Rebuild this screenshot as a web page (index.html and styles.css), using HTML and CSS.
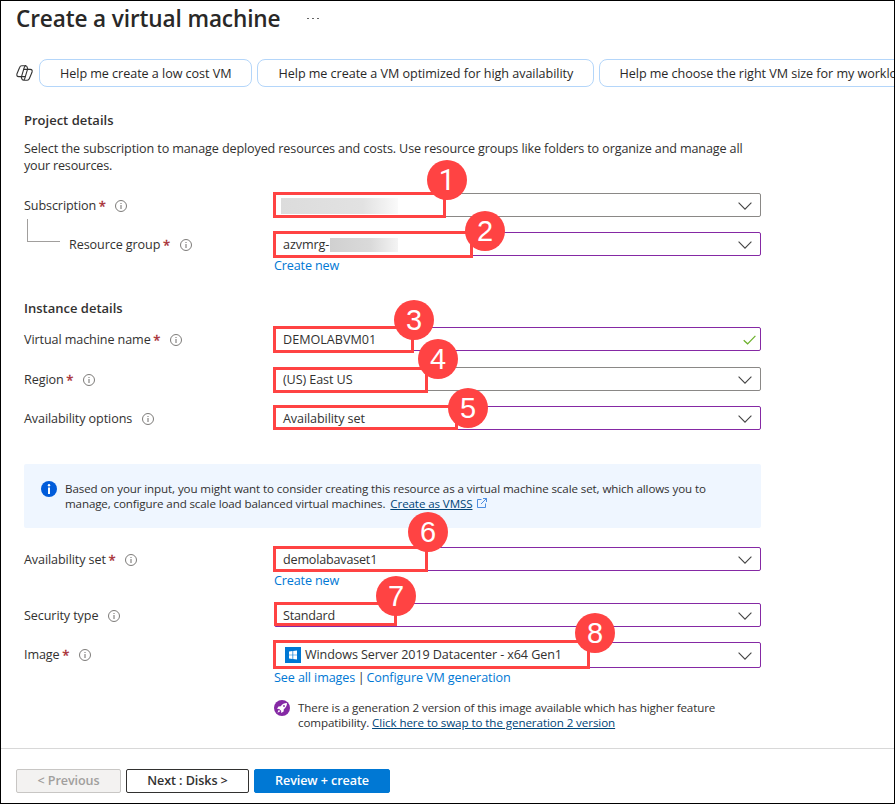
FILE: index.html
```html
<!DOCTYPE html>
<html lang="en">
<head>
<meta charset="utf-8">
<title>Create a virtual machine</title>
<link rel="stylesheet" href="styles.css">
</head>
<body>
<svg class="defs" width="0" height="0">
  <symbol id="info" viewBox="0 0 12 12"><circle cx="6" cy="6" r="5.5" fill="none" stroke="#6e6c6a" stroke-width=".9"/><path d="M6 5v4M6 3v1" stroke="#6e6c6a"/></symbol>
  <symbol id="chev" viewBox="0 0 14 8"><path d="M.6.7 7 7.1 13.4.7" fill="none" stroke="#444" stroke-width="1.1"/></symbol>
</svg>
<div class="page">
  <header class="head"><h1>Create a virtual machine</h1><span class="more"><i></i><i></i><i></i></span></header>
  <div class="chips">
    <svg class="copilot" viewBox="0 0 17 16" fill="none" stroke="#333" stroke-width="1.1" stroke-linejoin="round"><path d="M11.800 4.300 11.300 2.500Q10.900.8 9.400.8H5.800Q4.200.8 3.600 2.500L1 8.700Q.2 11.600 2.700 11.600H5.500L8.200 2.700Q8.800.8 10 .8"/><path d="M5.200 11.700 5.700 13.500Q6.100 15.200 7.600 15.200H11.200Q12.800 15.200 13.400 13.500L16 7.300Q16.800 4.400 14.300 4.400H11.500L8.800 13.300Q8.200 15.200 7 15.200"/><path d="M7.200 4.400h4.300M5.500 11.600h4"/></svg>
    <div class="chip c1">Help me create a low cost VM</div>
    <div class="chip c2">Help me create a VM optimized for high availability</div>
    <div class="chip c3">Help me choose the right VM size for my workload</div>
  </div>
  <main>
    <h2>Project details</h2>
    <p class="intro"><span class="wide">Select the subscription to manage deployed resources and costs. Use resource groups like folders to organize and manage all</span><br>your resources.</p>

    <div class="row r-sub">
      <label>Subscription <b>*</b><svg class="info"><use href="#info"/></svg></label>
      <div class="field gray"><span class="redact long"></span><svg class="chev"><use href="#chev"/></svg><span class="mark m1"><em>1</em></span></div>
    </div>
    <div class="row r-group">
      <label><span class="elbow"></span>Resource group <b>*</b><svg class="info"><use href="#info"/></svg></label>
      <div class="field">azvmrg-<span class="redact"></span><svg class="chev"><use href="#chev"/></svg><span class="mark m2"><em>2</em></span></div>
    </div>
    <div class="links"><a>Create new</a></div>

    <h2 class="second">Instance details</h2>
    <div class="row r-name">
      <label>Virtual machine name <b>*</b><svg class="info"><use href="#info"/></svg></label>
      <div class="field"><span class="t-name">DEMOLABVM01</span><svg class="check" viewBox="0 0 13 10"><path d="M.7 5.200 4.600 8.800 12.400.8" fill="none" stroke="#6bb02a" stroke-width="1.2"/></svg><span class="mark m3"><em>3</em></span></div>
    </div>
    <div class="row r-region">
      <label>Region <b>*</b><svg class="info"><use href="#info"/></svg></label>
      <div class="field gray">(US) East US<svg class="chev"><use href="#chev"/></svg><span class="mark m4"><em>4</em></span></div>
    </div>
    <div class="row r-opt">
      <label>Availability options<svg class="info"><use href="#info"/></svg></label>
      <div class="field">Availability set<svg class="chev"><use href="#chev"/></svg><span class="mark m5"><em>5</em></span></div>
    </div>

    <div class="banner">
      <svg class="binfo" viewBox="0 0 16 16"><circle cx="8" cy="8" r="8" fill="#015cda"/><circle cx="8" cy="4.200" r="1.200" fill="#fff"/><path d="M8 6.500V13" stroke="#fff" stroke-width="2"/></svg>
      <p>Based on your input, you might want to consider creating this resource as a virtual machine scale set, which allows you to<br><span class="l2">manage, configure and scale load balanced virtual machines.</span><a class="vmss">Create as VMSS</a><svg class="ext" viewBox="0 0 10 10"><path d="M4.500 1.500H.5v8h8v-4M6 .5h3.500V4M9.500.5 4 6" fill="none" stroke="#3b82dc" stroke-width=".9"/></svg></p>
    </div>

    <div class="row r-set">
      <label>Availability set <b>*</b><svg class="info"><use href="#info"/></svg></label>
      <div class="field"><span class="t-set">demolabavaset1</span><svg class="chev"><use href="#chev"/></svg><span class="mark m6"><em>6</em></span></div>
    </div>
    <div class="links"><a>Create new</a></div>
    <div class="row r-sec">
      <label>Security type<svg class="info"><use href="#info"/></svg></label>
      <div class="field"><span class="t-std">Standard</span><svg class="chev"><use href="#chev"/></svg><span class="mark m7"><em>7</em></span></div>
    </div>
    <div class="row r-img">
      <label>Image <b>*</b><svg class="info"><use href="#info"/></svg></label>
      <div class="field tall"><svg class="win" viewBox="0 0 16 16"><path fill="#0078d4" d="M0 0h16v16H0z"/><path fill="#fff" d="M4 4.500 7.500 4v3.700H4zM8.200 3.900 12 3.400v4.300H8.200zM4 8.300h3.500V12L4 11.500zM8.200 8.300H12v4.300l-3.800-.5z"/></svg>Windows Server 2019 Datacenter - x64 Gen1<svg class="chev"><use href="#chev"/></svg><span class="mark m8"><em>8</em></span></div>
    </div>
    <div class="links l-img"><a>See all images</a><i>|</i><a>Configure VM generation</a></div>
    <div class="gen">
      <svg class="rocket" viewBox="0 0 16 16"><circle cx="8" cy="8" r="8" fill="#8529a4"/><path fill="#fff" d="M13 3C10.300 3 8.200 4.200 6.800 6.200L4.500 6.400 3 8.800 5.200 8.900 7.100 10.800 7.200 13 9.600 11.500 9.800 9.200C11.800 7.800 13 5.700 13 3zM4.800 9.700l1.500 1.500-2.900 1.500z"/><circle cx="10" cy="6" r=".9" fill="#8529a4"/></svg>
      <p>There is a generation 2 version of this image available which has higher feature<br>compatibility. <a>Click here to swap to the generation 2 version</a></p>
    </div>
  </main>
  <footer>
    <button class="prev">&lt; Previous</button><button class="next">Next : Disks &gt;</button><button class="review">Review + create</button>
  </footer>
</div>
</body>
</html>
```
FILE: styles.css
```css
* { box-sizing: border-box; }
body { margin: 0; background: #fff; color: #323130; font: 12.6px/17px "Open Sans", "Noto Sans", sans-serif; letter-spacing: -0.1px; }
.defs { display: block; }
.page { width: 895px; height: 804px; border: 1px solid #000; overflow: hidden; display: flex; flex-direction: column; }
h1, h2, p { margin: 0; }
.head { display: flex; height: 58px; padding: 1px 0 0 15px; }
h1 { font-size: 22.6px; line-height: 34px; font-weight: 600; letter-spacing: -0.13px; color: #292827; width: 291px; }
.more { display: flex; gap: 3px; padding-top: 16px; }
.more i { width: 2px; height: 1px; background: #666; }
.chips { display: flex; height: 28px; padding-left: 15px; white-space: nowrap; flex: none; }
.copilot { width: 17px; height: 16px; margin: 6px 6px 0 0; flex: none; }
.chip { height: 28px; border: 1px solid #b4d6fa; border-radius: 8px; line-height: 27px; padding-left: 20px; margin-right: 5px; flex: none; letter-spacing: -0.05px; color: #292827; }
.c1 { width: 213px; }
.c2 { width: 337px; padding-left: 20.5px; }
.c3 { width: 340px; padding-left: 19.5px; }
main { flex: 1; padding-left: 23px; }
h2 { font-size: 13px; line-height: 18px; font-weight: 600; margin-top: 24px; letter-spacing: 0; }
.intro { margin-top: 11px; white-space: nowrap; letter-spacing: -0.2px; }
.wide { letter-spacing: -0.127px; }
.row { display: grid; grid-template-columns: 250px 487px; }
label { display: flex; align-items: center; white-space: pre; padding-top: 1px; }
label b { font: 13px/14px "Open Sans", sans-serif; color: #a4262c; margin-left: -0.5px; -webkit-text-stroke: 0.3px #a4262c; }
.info { width: 12px; height: 12px; margin: 0 0 0 9.5px; }
.field { position: relative; height: 24px; border: 1px solid #8529a4; border-radius: 2px; display: flex; align-items: center; padding: 1px 8px 0; }
.gray { border-color: #8a8886; }
.tall { height: 26px; padding: 0 8px 1px 10px; }
.r-img label { padding: 0 0 1px; }
.r-img .info { margin-top: 1px; }
.chev { width: 14px; height: 8px; margin: 0 0 0 auto; }
.tall .chev { margin-top: 2px; }
.check { width: 13px; height: 10px; margin: 0 -4px 0 auto; }
.redact { width: 68px; height: 14px; margin-left: 0.5px; background: linear-gradient(90deg, #d0d0d0, #dadada 60%, #f4f4f4); }
.redact.long { width: 117px; height: 16px; margin-left: -2px; background: linear-gradient(90deg, #dcdcdc, #e2e2e2 70%, #fafafa); }
.mark { position: absolute; z-index: 1; border: 3px solid #ff4343; }
.mark em { position: absolute; width: 40px; height: 40px; border-radius: 50%; background: #ff4343; color: #fff; font: 29px/41px "Liberation Sans", sans-serif; letter-spacing: 0; text-align: center; }
.m1 { left: -2px; top: -2px; width: 173px; height: 26px; }
.mark.m1 em { left: 151px; top: -35px; font-family: Roboto, sans-serif; }
.m2 { left: -2px; top: -2px; width: 200px; height: 27px; }
.m2 em { left: 189px; top: -23px; }
.m3 { left: -2px; top: -2px; width: 141px; height: 27px; }
.m3 em { left: 118px; top: -29px; }
.m4 { left: -2px; top: -1px; width: 155px; height: 26px; }
.m4 em { left: 142px; top: -31px; }
.m5 { left: -2px; top: -2px; width: 185px; height: 25px; }
.m5 em { left: 172px; top: -20px; }
.m6 { left: -2px; top: -2px; width: 155px; height: 26px; }
.m6 em { left: 132px; top: -37px; }
.m7 { left: -1px; top: -2px; width: 123px; height: 24px; }
.m7 em { left: 99px; top: -29px; }
.m8 { left: -2px; top: -3px; width: 317px; height: 29px; }
.m8 em { left: 299px; top: -30px; }
.r-sub { margin-top: 19px; }
.r-group { margin-top: 15px; }
.r-group label { padding-left: 45px; position: relative; }
.elbow { position: absolute; left: 3px; top: -13px; width: 33px; height: 23px; border: solid #a19f9d; border-width: 0 0 1px 1px; }
.links { margin-left: 250px; line-height: 20px; height: 18px; color: #0078d4; letter-spacing: -0.15px; }
.second { margin-top: 25px; }
.r-name { margin-top: 10px; }
.r-region { margin-top: 16px; }
.r-opt { margin-top: 15px; }
.t-name { letter-spacing: 0; }
.t-set, .t-std { letter-spacing: -0.2px; }
.banner { width: 737px; height: 64px; margin: 34px 0 19px; border-radius: 2px; background: #eff6ff; display: flex; padding: 17px 0 0 17px; }
.binfo { width: 16px; height: 16px; margin-right: 8px; flex: none; }
.banner p, .gen p { font-size: 11.6px; line-height: 15px; white-space: nowrap; letter-spacing: -0.11px; }
.banner .l2 { letter-spacing: -0.13px; }
.banner a, .gen a { color: #004578; text-decoration: underline; }
.gen a { letter-spacing: -0.08px; }
.vmss { margin-left: 5px; }
.ext { width: 10px; height: 10px; margin-left: 5px; }
.r-sec { margin-top: 14px; }
.r-img { margin-top: 15px; }
.win { width: 16px; height: 16px; margin-right: 4px; }
.l-img { display: flex; line-height: 19px; letter-spacing: -0.11px; }
.l-img i { font-style: normal; color: #323130; margin: 0 2px 0 2.5px; }
.gen { display: flex; margin: 14px 0 0 250px; }
.rocket { width: 16px; height: 16px; margin-right: 8px; }
footer { height: 55px; border-top: 1px solid #d8d8d8; padding: 20px 0 0 15px; display: flex; flex: none; }
button { height: 24px; border: 1px solid #323130; border-radius: 2px; background: #fff; color: #323130; padding: 0; font: 600 12.6px/20px "Open Sans", sans-serif; letter-spacing: -0.09px; }
.prev { width: 105px; background: #f3f2f1; border-color: #c8c6c4; color: #a19f9d; }
.next { width: 123px; margin: 0 5px; }
.review { width: 136px; background: #0078d4; border-color: #0078d4; color: #fff; }
```
